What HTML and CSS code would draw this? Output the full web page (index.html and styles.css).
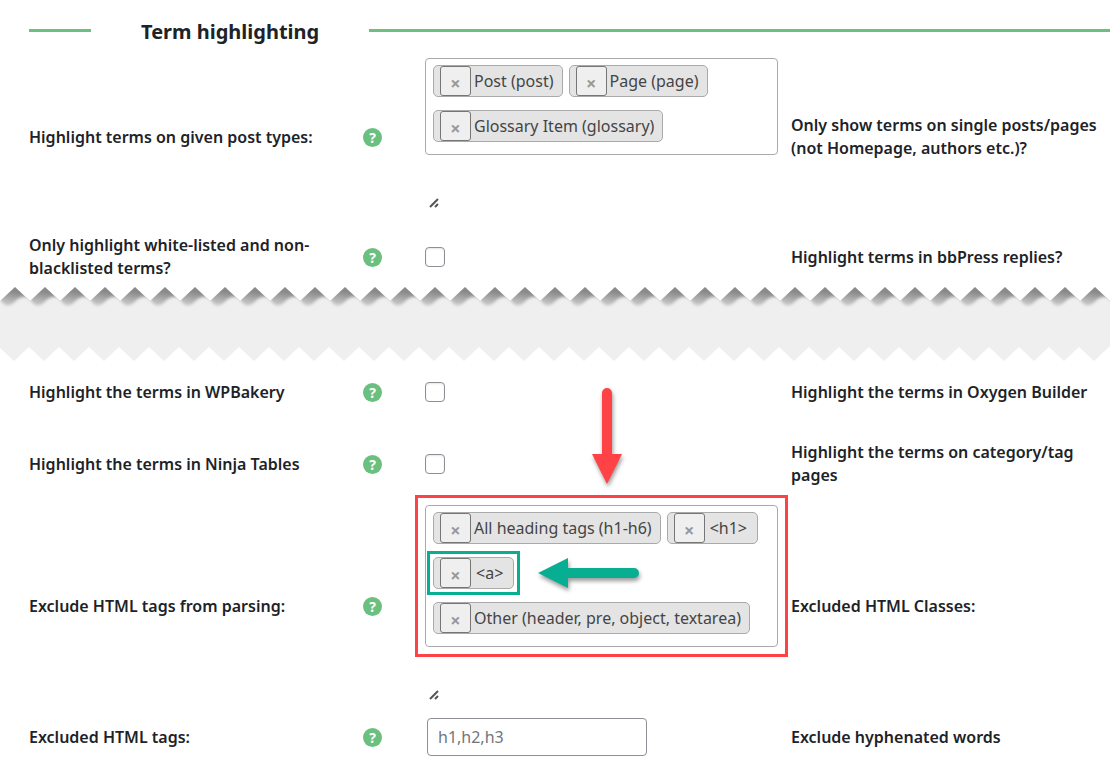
FILE: index.html
```html
<!DOCTYPE html>
<html lang="en">
<head>
    <meta charset="UTF-8">
    <meta name="viewport" content="width=device-width, initial-scale=1.0">
    <title>Term highlighting</title>
    <link rel="stylesheet" href="styles.css">
</head>
<body>

<form class="settings">
    <div class="section-title">
        <span class="line line-start"></span>
        <h2>Term highlighting</h2>
        <span class="line line-end"></span>
    </div>

    <div class="row">
        <span class="label" id="post-types">Highlight terms on given post types:</span>
        <button type="button" class="help" aria-label="Help">?</button>
        <div class="control">
            <ul class="tags" aria-labelledby="post-types">
                <li class="tag"><button type="button" class="remove">×</button><span>Post (post)</span></li>
                <li class="tag"><button type="button" class="remove">×</button><span>Page (page)</span></li>
                <li class="tag"><button type="button" class="remove">×</button><span>Glossary Item (glossary)</span></li>
            </ul>
            <svg class="grip" viewBox="0 0 10 10"><path d="M1 9L9 1M6 9L9 6"/></svg>
        </div>
        <span class="label">Only show terms on single posts/pages (not Homepage, authors etc.)?</span>
    </div>

    <div class="row row-check">
        <label class="label" for="whitelisted">Only highlight white-listed and non-blacklisted terms?</label>
        <button type="button" class="help" aria-label="Help">?</button>
        <div class="control"><input type="checkbox" id="whitelisted"></div>
        <span class="label">Highlight terms in bbPress replies?</span>
    </div>

    <!-- torn paper divider -->
    <svg class="torn" aria-hidden="true">
        <defs>
            <filter id="soft" x="-20%" y="-50%" width="140%" height="200%"><feGaussianBlur stdDeviation="1.5"/></filter>
            <linearGradient id="shade" x1="0.5" y1="0" x2="0.3" y2="1">
                <stop offset="0.2" stop-color="#8a8a8a"/>
                <stop offset="0.85" stop-color="#d4d4d4"/>
            </linearGradient>
            <clipPath id="peak"><path d="M0 14L15 0L30 14V24H0Z"/></clipPath>
            <pattern id="tear-top" width="30" height="24" patternUnits="userSpaceOnUse">
                <g clip-path="url(#peak)">
                    <rect width="30" height="24" fill="url(#shade)"/>
                    <path d="M-30 12C-27 17 -25 19 -22 19C-17 19 -13 10 -7 10C-4 10 -2 10 0 12C3 17 5 19 8 19C13 19 17 10 23 10C26 10 28 10 30 12C33 17 35 19 38 19C43 19 47 10 53 10L60 12V40H-30Z" fill="#efefef" filter="url(#soft)"/>
                    <rect y="21" width="30" height="3" fill="#efefef"/>
                </g>
            </pattern>
            <pattern id="tear-bottom" x="-1" y="60" width="30" height="14" patternUnits="userSpaceOnUse">
                <path d="M0 0H30L15 14Z" fill="#efefef"/>
            </pattern>
        </defs>
        <rect width="100%" height="24" fill="url(#tear-top)"/>
        <rect y="23" width="100%" height="37" fill="#efefef"/>
        <rect y="60" width="100%" height="14" fill="url(#tear-bottom)"/>
    </svg>

    <div class="row row-check">
        <label class="label" for="wpbakery">Highlight the terms in WPBakery</label>
        <button type="button" class="help" aria-label="Help">?</button>
        <div class="control"><input type="checkbox" id="wpbakery"></div>
        <span class="label">Highlight the terms in Oxygen Builder</span>
    </div>

    <div class="row row-check">
        <label class="label" for="ninja">Highlight the terms in Ninja Tables</label>
        <button type="button" class="help" aria-label="Help">?</button>
        <div class="control"><input type="checkbox" id="ninja"></div>
        <span class="label">Highlight the terms on category/tag pages</span>
    </div>

    <div class="row">
        <span class="label" id="exclude-tags">Exclude HTML tags from parsing:</span>
        <button type="button" class="help" aria-label="Help">?</button>
        <div class="control">
            <div class="marked">
                <ul class="tags" aria-labelledby="exclude-tags">
                    <li class="tag"><button type="button" class="remove">×</button><span>All heading tags (h1-h6)</span></li>
                    <li class="tag tag-code"><button type="button" class="remove">×</button><span>&lt;h1&gt;</span></li>
                    <li class="tag tag-code tag-marked"><button type="button" class="remove">×</button><span>&lt;a&gt;</span></li>
                    <li class="tag"><button type="button" class="remove">×</button><span>Other (header, pre, object, textarea)</span></li>
                </ul>
                <svg class="arrow arrow-down" viewBox="0 0 30 96" aria-hidden="true"><path d="M10 5a5 5 0 0 1 10 0V66H30L15 96L0 66H10Z"/></svg>
                <svg class="arrow arrow-left" viewBox="0 0 101 30" aria-hidden="true"><path d="M0 15L30 0V10H96a5 5 0 0 1 0 10H30V30Z"/></svg>
            </div>
            <svg class="grip" viewBox="0 0 10 10"><path d="M1 9L9 1M6 9L9 6"/></svg>
        </div>
        <span class="label">Excluded HTML Classes:</span>
    </div>

    <div class="row">
        <label class="label" for="excluded">Excluded HTML tags:</label>
        <button type="button" class="help" aria-label="Help">?</button>
        <div class="control"><input type="text" id="excluded" placeholder="h1,h2,h3"></div>
        <span class="label">Exclude hyphenated words</span>
    </div>
</form>

</body>
</html>
```

FILE: styles.css
```css
* {
    box-sizing: border-box;
}

body {
    margin: 0;
    background: #fff;
    color: #1d2327;
    font-family: "Noto Sans", "Open Sans", sans-serif;
    font-size: 16px;
    line-height: 23px;
}

.section-title {
    display: flex;
    align-items: flex-start;
    gap: 50px;
    padding: 8px 0 0 29px;
    height: 53px;
}

.section-title h2 {
    margin: 0;
    font-size: 20px;
    font-weight: 700;
    line-height: 47px;
}

.line {
    height: 3px;
    margin-top: 21px;
    background: #6bc07f;
}

.line-start {
    width: 62px;
}

.line-end {
    flex: 1;
}

.row {
    display: grid;
    grid-template-columns: 334fr 62fr 366fr 319fr;
    align-items: center;
    padding: 5px 0 5px 29px;
}

.row-check {
    min-height: 72px;
}

.label {
    font-weight: 600;
}

.row .label:first-child {
    padding-right: 40px;
}

.help {
    width: 19px;
    height: 19px;
    padding: 0;
    border: none;
    border-radius: 50%;
    background: #6bc07f;
    color: #fff;
    font: 700 14px/19px "Noto Sans", sans-serif;
    cursor: pointer;
}

.control {
    padding-right: 13px;
}

.tags {
    display: flex;
    flex-wrap: wrap;
    gap: 13px 6px;
    margin: 0;
    padding: 6px 7px 12px;
    border: 1px solid #aaa;
    border-radius: 4px;
    list-style: none;
}

.tag {
    display: flex;
    height: 32px;
    padding: 0 8px 0 6px;
    border: 1px solid #aaa;
    border-radius: 5px;
    background: #e4e4e4;
    color: #444;
    line-height: 31px;
    white-space: nowrap;
}

.tag-code span {
    padding: 0 2px;
}

.remove {
    width: 31px;
    margin-right: 3px;
    padding: 3px 0 0;
    border: 1px solid #767676;
    border-radius: 3px;
    background: #efefef;
    color: #999;
    font: 700 18px/24px "Noto Sans", sans-serif;
    cursor: pointer;
}

.grip {
    display: block;
    width: 10px;
    height: 10px;
    margin: 43px 0 8px 4px;
    fill: none;
    stroke: #555;
    stroke-width: 2;
}

input[type="checkbox"] {
    appearance: none;
    display: block;
    width: 20px;
    height: 20px;
    margin: 0;
    border: 1px solid #8c8f94;
    border-radius: 4px;
    background: #fff;
    box-shadow: inset 0 1px 2px rgba(0, 0, 0, 0.1);
}

input[type="text"] {
    display: block;
    width: 220px;
    height: 38px;
    margin-left: 2px;
    padding: 0 10px;
    border: 1px solid #8c8f94;
    border-radius: 4px;
    background: #fff;
    font: 16px "Noto Sans", sans-serif;
}

input::placeholder {
    color: #72767b;
}

.torn {
    display: block;
    position: relative;
    width: 100%;
    height: 74px;
    margin: -6px 0 -5px;
}

/* frames and arrows over the tag list */
.marked,
.tag-marked {
    position: relative;
}

.marked::after,
.tag-marked::after {
    content: "";
    position: absolute;
    pointer-events: none;
}

.marked::after {
    inset: -10px;
    border: 3px solid #ff4245;
}

.tag-marked::after {
    inset: -7px;
    border: 3px solid #08ae91;
}

.arrow {
    position: absolute;
    overflow: visible;
    filter: drop-shadow(1px 3px 2px rgba(0, 0, 0, 0.4));
}

.arrow-down {
    top: -117px;
    left: 167px;
    width: 30px;
    height: 96px;
    fill: #ff4245;
}

.arrow-left {
    top: 53px;
    left: 113px;
    width: 101px;
    height: 30px;
    fill: #08ae91;
}
```
